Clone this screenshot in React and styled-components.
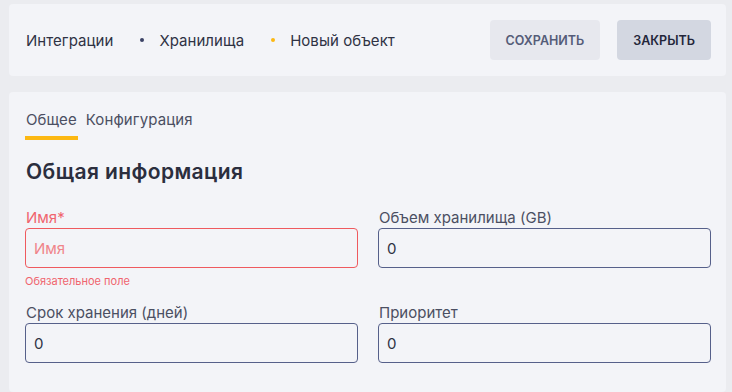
import React from "react";
import styled, { createGlobalStyle } from "styled-components";

const GlobalStyle = createGlobalStyle`
  html, body {
    margin: 0;
    padding: 0;
    background: #ebecf0;
    font-family: Inter, "Noto Sans", sans-serif;
  }
  * {
    box-sizing: border-box;
  }
`;

const Page = styled.div`
  padding: 4px 6px 0 9px;
`;

const Card = styled.div`
  background: #f3f4f8;
  border-radius: 4px;
`;

const Header = styled(Card)`
  height: 72px;
  display: flex;
  align-items: center;
  justify-content: space-between;
  padding: 0 15px 0 17px;
`;

const Crumbs = styled.nav`
  display: flex;
  align-items: center;
  font-size: 15px;
  letter-spacing: 0.05px;
  color: #2f3244;
`;

const Dot = styled.span`
  width: 4px;
  height: 4px;
  border-radius: 50%;
  margin: 0 15px 0 27px;
  background: ${(p) => (p.$active ? "#fcb813" : "#3b4266")};
`;

const Actions = styled.div`
  display: flex;
  gap: 17px;
`;

const Button = styled.button`
  height: 40px;
  padding: 0 16px;
  border: none;
  border-radius: 4px;
  font-family: inherit;
  font-size: 12.5px;
  font-weight: 600;
  text-transform: uppercase;
  background: ${(p) => (p.$primary ? "#d3d7e1" : "#e7e8ee")};
  color: ${(p) => (p.$primary ? "#23263a" : "#555c78")};
  cursor: pointer;
`;

const Body = styled(Card)`
  margin-top: 16px;
  min-height: 300px;
  padding: 18px 15px 0 16px;
`;

const Tabs = styled.div`
  display: flex;
  gap: 7px;
`;

const Tab = styled.div`
  padding: 0 1px 6px;
  font-size: 15px;
  line-height: 20px;
  letter-spacing: 0.1px;
  color: #4b4f62;
  border-bottom: 4px solid ${(p) => (p.$active ? "#fcb813" : "transparent")};
`;

const Title = styled.h2`
  margin: 19px 0 23px 1px;
  font-size: 21px;
  line-height: 26px;
  font-weight: 600;
  letter-spacing: 0.4px;
  color: #2b2e3e;
`;

const Grid = styled.div`
  display: grid;
  grid-template-columns: 1fr 1fr;
  column-gap: 20px;
  row-gap: 15px;
  align-items: start;
`;

const Field = styled.div`
  display: flex;
  flex-direction: column;
`;

const Label = styled.label`
  font-size: 15px;
  line-height: 20px;
  margin-left: 1px;
  color: ${(p) => (p.$error ? "#f0646e" : "#4b4f62")};
`;

const Input = styled.input`
  height: 40px;
  padding: 0 8px;
  border: 1px solid ${(p) => (p.$error ? "#ef5a5f" : "#56608a")};
  border-radius: 4px;
  background: transparent;
  font-family: inherit;
  font-size: 15px;
  color: #2f3244;
  outline: none;

  &::placeholder {
    color: #f0848a;
  }
`;

const Hint = styled.div`
  margin-top: 6px;
  font-size: 11px;
  line-height: 14px;
  color: #f0646e;
`;

export default function App() {
  return (
    <>
      <GlobalStyle />
      <Page>
        <Header>
          <Crumbs>
            <span>Интеграции</span>
            <Dot />
            <span>Хранилища</span>
            <Dot $active />
            <span>Новый объект</span>
          </Crumbs>
          <Actions>
            <Button>Сохранить</Button>
            <Button $primary>Закрыть</Button>
          </Actions>
        </Header>
        <Body>
          <Tabs>
            <Tab $active>Общее</Tab>
            <Tab>Конфигурация</Tab>
          </Tabs>
          <Title>Общая информация</Title>
          <Grid>
            <Field>
              <Label $error>Имя*</Label>
              <Input $error placeholder="Имя" />
              <Hint>Обязательное поле</Hint>
            </Field>
            <Field>
              <Label>Объем хранилища (GB)</Label>
              <Input defaultValue="0" />
            </Field>
            <Field>
              <Label>Срок хранения (дней)</Label>
              <Input defaultValue="0" />
            </Field>
            <Field>
              <Label>Приоритет</Label>
              <Input defaultValue="0" />
            </Field>
          </Grid>
        </Body>
      </Page>
    </>
  );
}
